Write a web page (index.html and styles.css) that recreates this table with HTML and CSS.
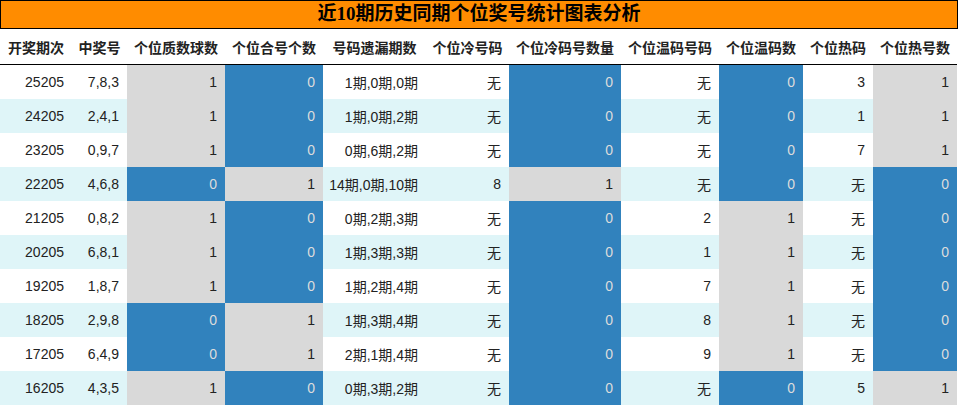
FILE: index.html
```html
<!DOCTYPE html>
<html lang="zh">
<head>
<meta charset="utf-8">
<link rel="stylesheet" href="styles.css">
</head>
<body>
<div class="title">近10期历史同期个位奖号统计图表分析</div>
<table class="stats">
  <colgroup>
    <col class="c1"><col class="c2"><col class="c3"><col class="c4"><col class="c5"><col class="c6"><col class="c7"><col class="c8"><col class="c9"><col class="c10"><col class="c11">
  </colgroup>
  <thead>
    <tr>
      <th>开奖期次</th><th>中奖号</th><th>个位质数球数</th><th>个位合号个数</th><th>号码遗漏期数</th><th>个位冷号码</th><th>个位冷码号数量</th><th>个位温码号码</th><th>个位温码数</th><th>个位热码</th><th>个位热号数</th>
    </tr>
  </thead>
  <tbody>
    <tr><td>25205</td><td>7,8,3</td><td class="g">1</td><td class="b">0</td><td>1期,0期,0期</td><td>无</td><td class="b">0</td><td>无</td><td class="b">0</td><td>3</td><td class="g">1</td></tr>
    <tr><td>24205</td><td>2,4,1</td><td class="g">1</td><td class="b">0</td><td>1期,0期,2期</td><td>无</td><td class="b">0</td><td>无</td><td class="b">0</td><td>1</td><td class="g">1</td></tr>
    <tr><td>23205</td><td>0,9,7</td><td class="g">1</td><td class="b">0</td><td>0期,6期,2期</td><td>无</td><td class="b">0</td><td>无</td><td class="b">0</td><td>7</td><td class="g">1</td></tr>
    <tr><td>22205</td><td>4,6,8</td><td class="b">0</td><td class="g">1</td><td>14期,0期,10期</td><td>8</td><td class="g">1</td><td>无</td><td class="b">0</td><td>无</td><td class="b">0</td></tr>
    <tr><td>21205</td><td>0,8,2</td><td class="g">1</td><td class="b">0</td><td>0期,2期,3期</td><td>无</td><td class="b">0</td><td>2</td><td class="g">1</td><td>无</td><td class="b">0</td></tr>
    <tr><td>20205</td><td>6,8,1</td><td class="g">1</td><td class="b">0</td><td>1期,3期,3期</td><td>无</td><td class="b">0</td><td>1</td><td class="g">1</td><td>无</td><td class="b">0</td></tr>
    <tr><td>19205</td><td>1,8,7</td><td class="g">1</td><td class="b">0</td><td>1期,2期,4期</td><td>无</td><td class="b">0</td><td>7</td><td class="g">1</td><td>无</td><td class="b">0</td></tr>
    <tr><td>18205</td><td>2,9,8</td><td class="b">0</td><td class="g">1</td><td>1期,3期,4期</td><td>无</td><td class="b">0</td><td>8</td><td class="g">1</td><td>无</td><td class="b">0</td></tr>
    <tr><td>17205</td><td>6,4,9</td><td class="b">0</td><td class="g">1</td><td>2期,1期,4期</td><td>无</td><td class="b">0</td><td>9</td><td class="g">1</td><td>无</td><td class="b">0</td></tr>
    <tr><td>16205</td><td>4,3,5</td><td class="g">1</td><td class="b">0</td><td>0期,3期,2期</td><td>无</td><td class="b">0</td><td>无</td><td class="b">0</td><td>5</td><td class="g">1</td></tr>
  </tbody>
</table>
</body>
</html>
```

FILE: styles.css
```css
html, body {
  margin: 0;
  padding: 0;
  background: #ffffff;
}

body {
  width: 958px;
  overflow: hidden;
}

.title {
  box-sizing: border-box;
  width: 958px;
  height: 29px;
  border: 1px solid #000;
  background: #ff8c00;
  color: #000;
  font-family: "Liberation Serif", "Noto Sans CJK SC", serif;
  font-weight: bold;
  font-size: 19px;
  line-height: 26px;
  text-align: center;
}

.stats {
  width: 957px;
  table-layout: fixed;
  border-collapse: collapse;
  border-spacing: 0;
  font-family: "Liberation Sans", "Noto Sans CJK SC", sans-serif;
  font-size: 14px;
  color: #222;
}

.c1 { width: 72px; }
.c2 { width: 55px; }
.c3 { width: 98px; }
.c4 { width: 98px; }
.c5 { width: 103px; }
.c6 { width: 83px; }
.c7 { width: 112px; }
.c8 { width: 98px; }
.c9 { width: 84px; }
.c10 { width: 70px; }
.c11 { width: 84px; }

.stats th {
  height: 35px;
  padding: 0;
  font-family: "Noto Sans CJK SC", sans-serif;
  font-weight: bold;
  font-size: 14px;
  color: #222;
  text-align: center;
  white-space: nowrap;
  border-bottom: 1px solid #000;
}

.stats td {
  height: 34px;
  padding: 0 8px 0 0;
  text-align: right;
  white-space: nowrap;
  vertical-align: middle;
}

.stats tbody tr:nth-child(even) {
  background: #dff5f8;
}

.stats td.g {
  background: #d9d9d9;
  color: #222;
}

.stats td.b {
  background: #3182bd;
  color: #dcdcdc;
}
```
